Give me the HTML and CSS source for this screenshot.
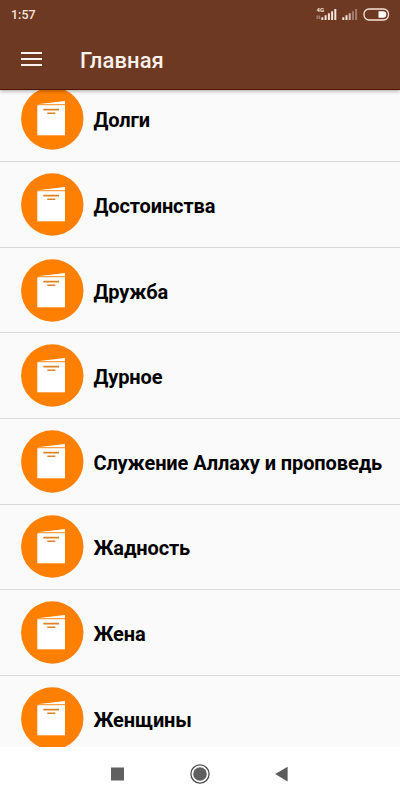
FILE: index.html
```html
<!DOCTYPE html>
<html lang="ru">
<head>
    <meta charset="UTF-8">
    <meta name="viewport" content="width=device-width, initial-scale=1.0">
    <title>Главная</title>
    <link rel="stylesheet" href="styles.css">
</head>
<body>

    <!-- Book icon, used by every row -->
    <svg class="symbols" width="0" height="0">
        <symbol id="book" viewBox="0 0 63 63">
            <circle cx="31.3" cy="31.5" r="31.2" fill="#ff8000"/>
            <path d="M16.3 17.2L44 14V17.2Z" fill="#fff"/>
            <path d="M16.3 18.2H44V48.3H16.3Z" fill="#fff"/>
            <path d="M22.3 22.6H38M26.3 26.2H34.3" stroke="#dc8424" stroke-width="1.6"/>
        </symbol>
    </svg>

    <div class="screen">
        <!-- Header -->
        <div class="header">
            <div class="status-bar">
                <span class="time">1:57</span>
                <svg class="status-icons" width="76" height="16" viewBox="0 0 76 16" fill="#f6e3da">
                    <text class="network" x="2.5" y="6">4G</text>
                    <path d="M2.5 9.5H4.5V13H2.5ZM5 9.5H6.2V13H5Z" opacity=".4"/>
                    <path d="M7.3 11.3H9.3V14H7.3ZM10.6 9.3H12.6V14H10.6ZM13.9 7.3H15.9V14H13.9ZM17.1 5.3H19.1V14H17.1ZM20.3 3H22.3V14H20.3Z"/>
                    <path d="M28.3 11.3H30.3V14H28.3ZM31.5 9.3H33.5V14H31.5Z"/>
                    <path d="M34.7 7.3H36.7V14H34.7Z" opacity=".75"/>
                    <path d="M37.9 5.3H39.9V14H37.9ZM41.1 3H43.1V14H41.1Z" opacity=".4"/>
                    <rect x="50" y="3" width="24.5" height="11" rx="5" fill="none" stroke="#f6e3da" stroke-width="1.3"/>
                    <path d="M64.5 5.2H69A3.3 3.3 0 0 1 69 11.8H64.5Z" fill="#fff"/>
                </svg>
            </div>
            <div class="toolbar">
                <div class="menu">
                    <span></span>
                    <span></span>
                    <span></span>
                </div>
                <div class="title">Главная</div>
            </div>
        </div>

        <!-- Topics -->
        <div class="content">
            <div class="list">
                <div class="item"><svg class="icon"><use href="#book"/></svg><span class="label">Долги</span></div>
                <div class="item"><svg class="icon"><use href="#book"/></svg><span class="label">Достоинства</span></div>
                <div class="item"><svg class="icon"><use href="#book"/></svg><span class="label">Дружба</span></div>
                <div class="item"><svg class="icon"><use href="#book"/></svg><span class="label">Дурное</span></div>
                <div class="item"><svg class="icon"><use href="#book"/></svg><span class="label">Служение Аллаху и проповедь</span></div>
                <div class="item"><svg class="icon"><use href="#book"/></svg><span class="label">Жадность</span></div>
                <div class="item"><svg class="icon"><use href="#book"/></svg><span class="label">Жена</span></div>
                <div class="item"><svg class="icon"><use href="#book"/></svg><span class="label">Женщины</span></div>
            </div>
        </div>

        <!-- Bottom navigation -->
        <div class="nav-bar">
            <svg width="20" height="20" viewBox="0 0 20 20"><rect x="3" y="3.5" width="13" height="13" fill="#606060"/></svg>
            <svg width="20" height="20" viewBox="0 0 20 20">
                <circle cx="10" cy="10" r="9.1" fill="none" stroke="#4c4c4c" stroke-width="1.3"/>
                <circle cx="10" cy="10" r="6.8" fill="#606060"/>
            </svg>
            <svg width="20" height="20" viewBox="0 0 20 20"><path d="M3.2 10L15.6 2.8V17.4Z" fill="#5c5c5c"/></svg>
        </div>
    </div>

</body>
</html>
```
FILE: styles.css
```css
body, html {
    margin: 0;
    padding: 0;
    height: 100%;
    font-family: Roboto, "Noto Sans", sans-serif;
    background-color: #ffffff;
    overflow: hidden;
}

.symbols {
    display: block;
}

.screen {
    display: flex;
    flex-direction: column;
    height: 800px;
    width: 400px;
}

/* Header */
.header {
    position: relative;
    z-index: 1;
    box-sizing: border-box;
    height: 90px;
    background-color: #6d3923;
    border-bottom: 1px solid #501508;
    box-shadow: 0 1px 4px rgba(0, 0, 0, 0.35);
    color: #fdf1ea;
}

.status-bar {
    display: flex;
    justify-content: space-between;
    align-items: center;
    height: 29px;
    padding: 0 10px 0 11px;
}

.time {
    font-size: 12.5px;
    font-weight: 500;
    color: #f9e4d8;
}

.status-icons {
    display: block;
    margin-top: -1px;
}

.network {
    font-size: 6px;
    font-weight: bold;
}

.toolbar {
    display: flex;
    align-items: center;
    height: 60px;
    padding-left: 21px;
}

.menu {
    display: flex;
    flex-direction: column;
    gap: 4px;
    width: 21px;
    margin-top: -1px;
}

.menu span {
    height: 2px;
    background-color: #fdf1ea;
}

.title {
    margin: 3px 0 0 38px;
    font-size: 22px;
    font-weight: 500;
    line-height: 28px;
    letter-spacing: 0.1px;
}

/* List */
.content {
    flex: 1;
    overflow: hidden;
    background-color: #fafafa;
}

.list {
    margin-top: -13.4px;
}

.item {
    display: flex;
    align-items: center;
    box-sizing: border-box;
    height: 85.6px;
    padding-left: 21px;
    border-bottom: 1px solid #dadada;
}

.icon {
    flex: none;
    width: 63px;
    height: 63px;
}

.label {
    margin: 3px 0 0 9.4px;
    font-size: 20px;
    font-weight: bold;
    line-height: 24px;
    letter-spacing: -0.1px;
    color: #000;
    white-space: nowrap;
}

/* Bottom navigation */
.nav-bar {
    display: flex;
    justify-content: center;
    align-items: center;
    gap: 62px;
    height: 53px;
    background-color: #ffffff;
}
```
